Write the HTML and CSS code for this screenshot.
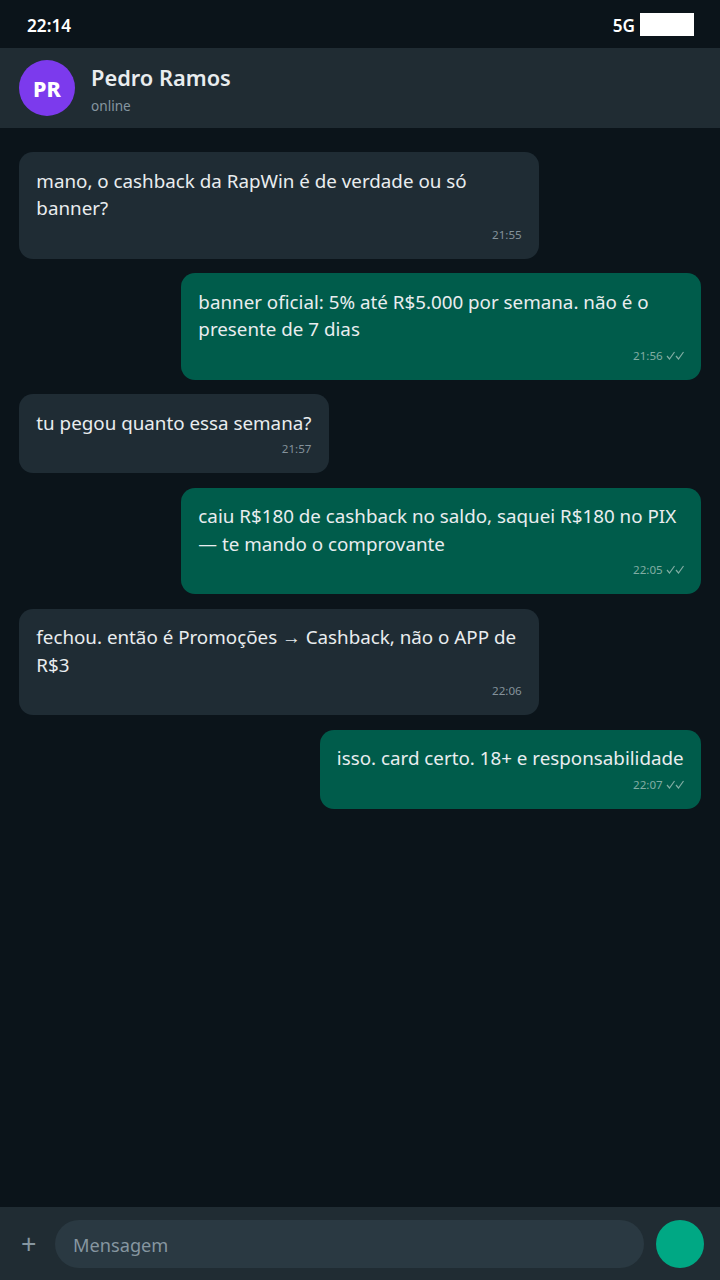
FILE: index.html
```html
<!DOCTYPE html>
<html lang="pt-BR">
<head>
    <meta charset="UTF-8">
    <meta name="viewport" content="width=device-width, initial-scale=1.0">
    <title>Pedro Ramos</title>
    <link rel="stylesheet" href="styles.css">
</head>
<body>
    <div class="phone">
        <div class="status-bar">
            <span class="clock">22:14</span>
            <div class="status-right">
                <span class="network">5G</span>
                <div class="battery"></div>
            </div>
        </div>

        <div class="chat-header">
            <div class="avatar">PR</div>
            <div class="contact">
                <div class="contact-name">Pedro Ramos</div>
                <div class="contact-status">online</div>
            </div>
        </div>

        <div class="messages">
            <div class="bubble in">
                <div class="text">mano, o cashback da RapWin é de verdade ou só banner?</div>
                <div class="meta">21:55</div>
            </div>
            <div class="bubble out">
                <div class="text">banner oficial: 5% até R$5.000 por semana. não é o presente de 7 dias</div>
                <div class="meta">21:56 <svg class="ticks" viewBox="0 0 18 9"><path d="M1 5L3.5 8L8.5 1M10 5L12.5 8L17.5 1"/></svg></div>
            </div>
            <div class="bubble in">
                <div class="text">tu pegou quanto essa semana?</div>
                <div class="meta">21:57</div>
            </div>
            <div class="bubble out">
                <div class="text">caiu R$180 de cashback no saldo, saquei R$180 no PIX — te mando o comprovante</div>
                <div class="meta">22:05 <svg class="ticks" viewBox="0 0 18 9"><path d="M1 5L3.5 8L8.5 1M10 5L12.5 8L17.5 1"/></svg></div>
            </div>
            <div class="bubble in">
                <div class="text">fechou. então é Promoções → Cashback, não o APP de R$3</div>
                <div class="meta">22:06</div>
            </div>
            <div class="bubble out">
                <div class="text">isso. card certo. 18+ e responsabilidade</div>
                <div class="meta">22:07 <svg class="ticks" viewBox="0 0 18 9"><path d="M1 5L3.5 8L8.5 1M10 5L12.5 8L17.5 1"/></svg></div>
            </div>
        </div>

        <div class="composer">
            <span class="plus">+</span>
            <div class="input">Mensagem</div>
            <div class="send"></div>
        </div>
    </div>
</body>
</html>
```

FILE: styles.css
```css
* {
    box-sizing: border-box;
    margin: 0;
    padding: 0;
}

body {
    font-family: "Noto Sans", "Open Sans", Arial, sans-serif;
    background: #0b141a;
}

.phone {
    display: flex;
    flex-direction: column;
    height: 1280px;
    background: #0b141a;
}

.status-bar {
    display: flex;
    justify-content: space-between;
    align-items: center;
    height: 48px;
    padding: 2px 26px 0 27px;
    color: #fff;
    font-size: 17.2px;
    font-weight: 600;
    background: #0b141a;
}

.status-right {
    display: flex;
    align-items: center;
    gap: 5px;
}

.battery {
    width: 54px;
    height: 23px;
    margin-top: -2px;
    background: #fff;
}

.chat-header {
    display: flex;
    align-items: center;
    gap: 16px;
    height: 80px;
    padding: 0 19px;
    background: #202c33;
}

.avatar {
    display: flex;
    justify-content: center;
    align-items: center;
    width: 56px;
    height: 56px;
    border-radius: 50%;
    background: #7c3aed;
    color: #fff;
    font-size: 21.5px;
    font-weight: 800;
}

.contact {
    padding-top: 3px;
}

.contact-name {
    color: #e9edef;
    font-size: 21.8px;
    font-weight: 600;
    line-height: 28px;
}

.contact-status {
    margin-top: 4px;
    color: #8696a0;
    font-size: 13.6px;
    line-height: 20px;
}

.messages {
    flex: 1;
    display: flex;
    flex-direction: column;
    gap: 14.5px;
    padding: 24px 19px;
}

.bubble {
    max-width: 520px;
    padding: 15.5px 17.33px 15px;
    border-radius: 14px;
    color: #e9edef;
}

.bubble.in {
    align-self: flex-start;
    background: #1f2c34;
}

.bubble.out {
    align-self: flex-end;
    background: #005c4b;
}

.text {
    font-size: 18.8px;
    line-height: 27.5px;
}

.meta {
    margin-top: 3px;
    color: #84929b;
    font-size: 11.6px;
    line-height: 18px;
    text-align: right;
}

.bubble.out .meta {
    color: #80ada3;
}

.ticks {
    width: 18px;
    height: 9px;
    fill: none;
    stroke: #80ada3;
    stroke-width: 1.2;
}

.composer {
    display: flex;
    align-items: center;
    gap: 12px;
    height: 73px;
    padding: 0 16px 0 21px;
    background: #202c33;
}

.plus {
    width: 22px;
    color: #8696a0;
    font-size: 27px;
    line-height: 1;
}

.input {
    flex: 1;
    height: 48px;
    padding: 1px 18px 0;
    border-radius: 24px;
    background: #2a3942;
    color: #8696a0;
    font-size: 18.2px;
    line-height: 48px;
}

.send {
    width: 48px;
    height: 48px;
    border-radius: 50%;
    background: #00a884;
}
```
